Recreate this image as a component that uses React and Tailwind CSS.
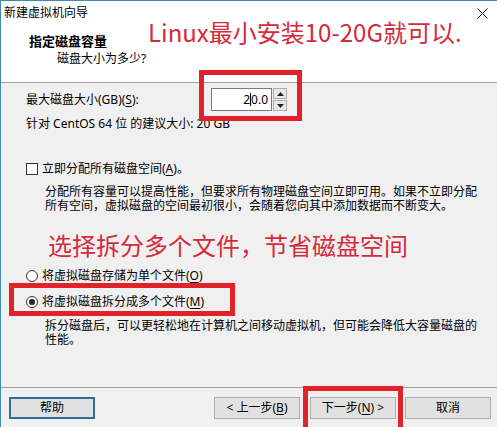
const fontStack = "font-['Noto_Sans','Noto_Sans_CJK_SC',sans-serif]"

function Key({ children }) {
  return <span className="underline underline-offset-2">{children}</span>
}

function Button({ children, focused, className = '' }) {
  return (
    <div
      className={`flex h-[22px] w-[86px] shrink-0 items-center justify-center bg-[#e1e1e1] leading-none ${
        focused ? 'border-2 border-[#2f6f95]' : 'border border-[#adadad]'
      } ${className}`}
    >
      {children}
    </div>
  )
}

function Radio({ checked }) {
  return (
    <span className="flex h-[12px] w-[12px] shrink-0 items-center justify-center rounded-full border border-[#333] bg-white">
      {checked && <span className="h-[6px] w-[6px] rounded-full bg-[#222]" />}
    </span>
  )
}

export default function App() {
  return (
    <div
      className={`relative flex h-[427px] w-[497px] flex-col overflow-hidden border-l border-t border-[#3d8bb5] bg-[#f0f0f0] text-[12px] text-black ${fontStack}`}
    >
      {/* header */}
      <div className="h-[82px] shrink-0 border-b border-[#a0a0a0] bg-white">
        <div className="flex h-[24px] items-center justify-between pl-[3px] pr-[9px]">
          <span className="leading-[16px]">新建虚拟机向导</span>
          <svg width="11" height="11" viewBox="0 0 11 11" className="text-[#111]">
            <path d="M0.5 0.5 L10.5 10.5 M10.5 0.5 L0.5 10.5" stroke="currentColor" strokeWidth="1" />
          </svg>
        </div>
        <div className="mt-[8px] pl-[28px] text-[13px] font-bold leading-[16px]">指定磁盘容量</div>
        <div className="mt-[2px] pl-[56px] leading-[16px]">磁盘大小为多少?</div>
      </div>

      {/* body */}
      <div className="flex-1 pl-[25px]">
        <div className="mt-[5px] flex h-[23px] items-center">
          <span className="w-[185px] shrink-0 leading-[16px]">
            最大磁盘大小(GB)(<Key>S</Key>):
          </span>
          <div className="flex h-[23px] w-[61px] items-center justify-end border border-[#7a7a7a] bg-white pr-[3px] leading-none">
            2<span className="inline-block h-[13px] w-[1px] bg-black" />0.0
          </div>
          <div className="ml-[1px] flex h-[23px] w-[14px] flex-col gap-[1px]">
            <div className="flex h-[11px] items-center justify-center border border-[#adadad] bg-[#e8e8e8]">
              <svg width="7" height="4" viewBox="0 0 7 4">
                <path d="M0 4 L3.5 0 L7 4 Z" fill="#222" />
              </svg>
            </div>
            <div className="flex h-[11px] items-center justify-center border border-[#adadad] bg-[#e8e8e8]">
              <svg width="7" height="4" viewBox="0 0 7 4">
                <path d="M0 0 L7 0 L3.5 4 Z" fill="#222" />
              </svg>
            </div>
          </div>
        </div>
        <div className="mt-[5px] leading-[16px]">针对 CentOS 64 位 的建议大小: 20 GB</div>

        <div className="mt-[29px] flex h-[16px] items-center gap-[4px]">
          <span className="h-[12px] w-[12px] shrink-0 border border-[#333] bg-white" />
          <span className="leading-[16px]">
            立即分配所有磁盘空间(<Key>A</Key>)。
          </span>
        </div>
        <div className="mt-[8px] whitespace-nowrap pl-[19px] leading-[14px]">
          分配所有容量可以提高性能，但要求所有物理磁盘空间立即可用。如果不立即分配
          <br />
          所有空间，虚拟磁盘的空间最初很小，会随着您向其中添加数据而不断变大。
        </div>

        <div className="mt-[55px] flex h-[16px] items-center gap-[4px]">
          <Radio />
          <span className="leading-[16px]">
            将虚拟磁盘存储为单个文件(<Key>O</Key>)
          </span>
        </div>
        <div className="mt-[10px] flex h-[16px] items-center gap-[4px]">
          <Radio checked />
          <span className="leading-[16px]">
            将虚拟磁盘拆分成多个文件(<Key>M</Key>)
          </span>
        </div>
        <div className="mt-[9px] whitespace-nowrap pl-[19px] leading-[14px]">
          拆分磁盘后，可以更轻松地在计算机之间移动虚拟机，但可能会降低大容量磁盘的
          <br />
          性能。
        </div>
      </div>

      {/* footer */}
      <div className="flex h-[40px] shrink-0 border-t border-[#a0a0a0] pl-[8px] pt-[9px]">
        <Button focused>帮助</Button>
        <Button className="ml-[119px]">
          &lt; 上一步(<Key>B</Key>)
        </Button>
        <Button className="ml-[10px]">
          下一步(<Key>N</Key>) &gt;
        </Button>
        <Button className="ml-[9px]">取消</Button>
      </div>

      {/* annotations */}
      <div className="absolute left-[147px] top-[19px] whitespace-nowrap font-['Noto_Sans_CJK_SC',sans-serif] text-[24px] leading-[24px] text-[#d42a3c]">
        Linux最小安装10-20G就可以.
      </div>
      <div className="absolute left-[47px] top-[232px] whitespace-nowrap font-['Noto_Sans_CJK_SC',sans-serif] text-[24px] leading-[24px] text-[#d42a3c]">
        选择拆分多个文件，节省磁盘空间
      </div>
      <div className="pointer-events-none absolute left-[198px] top-[69px] h-[51px] w-[103px] border-[5px] border-[#e2222b]" />
      <div className="pointer-events-none absolute left-[8px] top-[282px] h-[33px] w-[226px] border-[5px] border-[#e2222b]" />
      <div className="pointer-events-none absolute left-[302px] top-[385px] h-[50px] w-[100px] border-[5px] border-[#e2222b]" />
    </div>
  )
}
